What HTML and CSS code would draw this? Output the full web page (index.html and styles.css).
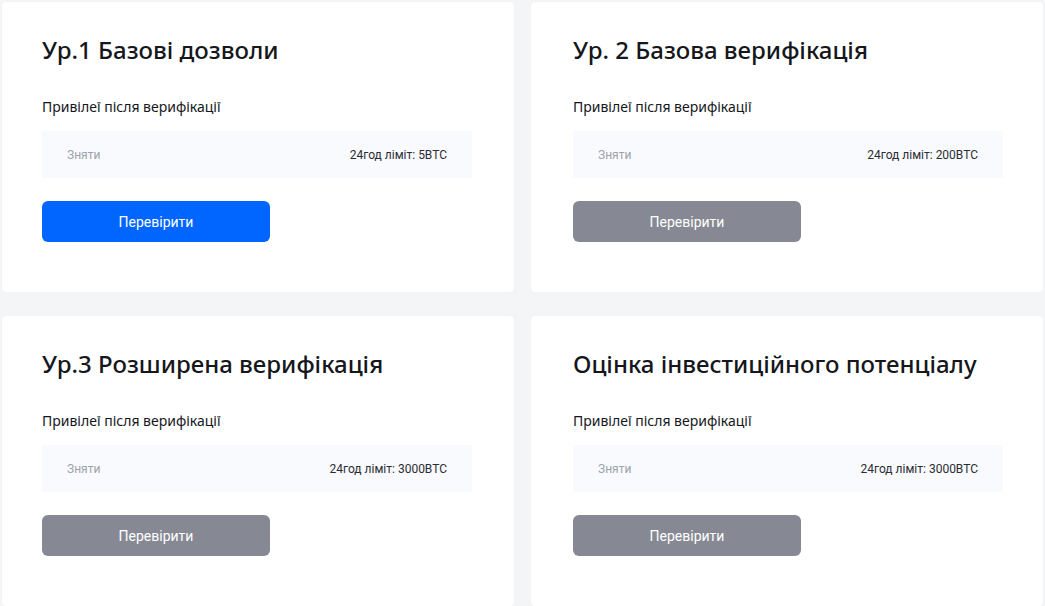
FILE: index.html
```html
<!DOCTYPE html>
<html lang="uk">
<head>
  <meta charset="UTF-8" />
  <meta name="viewport" content="width=device-width, initial-scale=1.0" />
  <title>Верифікація</title>
  <link rel="stylesheet" href="styles.css">
</head>
<body>
  <div class="levels">
    <div class="card">
      <h2>Ур.1 Базові дозволи</h2>
      <p class="label">Привілеї після верифікації</p>
      <div class="limit">
        <span class="limit-name">Зняти</span>
        <span class="limit-value">24год ліміт: 5BTC</span>
      </div>
      <button class="verify active">Перевірити</button>
    </div>
    <div class="card">
      <h2>Ур. 2 Базова верифікація</h2>
      <p class="label">Привілеї після верифікації</p>
      <div class="limit">
        <span class="limit-name">Зняти</span>
        <span class="limit-value">24год ліміт: 200BTC</span>
      </div>
      <button class="verify">Перевірити</button>
    </div>
    <div class="card">
      <h2>Ур.3 Розширена верифікація</h2>
      <p class="label">Привілеї після верифікації</p>
      <div class="limit">
        <span class="limit-name">Зняти</span>
        <span class="limit-value">24год ліміт: 3000BTC</span>
      </div>
      <button class="verify">Перевірити</button>
    </div>
    <div class="card">
      <h2>Оцінка інвестиційного потенціалу</h2>
      <p class="label">Привілеї після верифікації</p>
      <div class="limit">
        <span class="limit-name">Зняти</span>
        <span class="limit-value">24год ліміт: 3000BTC</span>
      </div>
      <button class="verify">Перевірити</button>
    </div>
  </div>
</body>
</html>
```

FILE: styles.css
```css
body { margin: 0; background-color: #f4f5f7; font-family: "Noto Sans", sans-serif; color: #15171c; overflow: hidden; }
.levels { display: grid; grid-template-columns: 512px 512px; column-gap: 17px; row-gap: 24px; padding: 2px 2px 0 2px; }
.card { background-color: #fff; border-radius: 4px; height: 290px; box-sizing: border-box; padding: 30px 40px 0 40px; box-shadow: 0 0 2px rgba(0, 0, 0, 0.04); }
.card:nth-child(even) { padding-left: 42px; }
.card h2 { margin: 0; font-size: 24px; font-weight: 500; line-height: 36px; }
.card .label { margin: 29px 0 0 0; font-size: 14px; line-height: 20px; }
.limit { display: flex; justify-content: space-between; align-items: center; width: 430px; height: 47px; margin-top: 14px; padding: 0 25px; box-sizing: border-box; background-color: #f9fafd; font-family: Roboto, sans-serif; font-size: 12px; }
.limit-name { color: #9da2ab; }
.limit-value { color: #2b2d33; }
.verify { display: block; width: 228px; height: 41px; margin-top: 23px; border: none; border-radius: 6px; background-color: #868993; color: #fff; font-family: Roboto, sans-serif; font-size: 14px; cursor: pointer; }
.verify.active { background-color: #0066ff; }
```
